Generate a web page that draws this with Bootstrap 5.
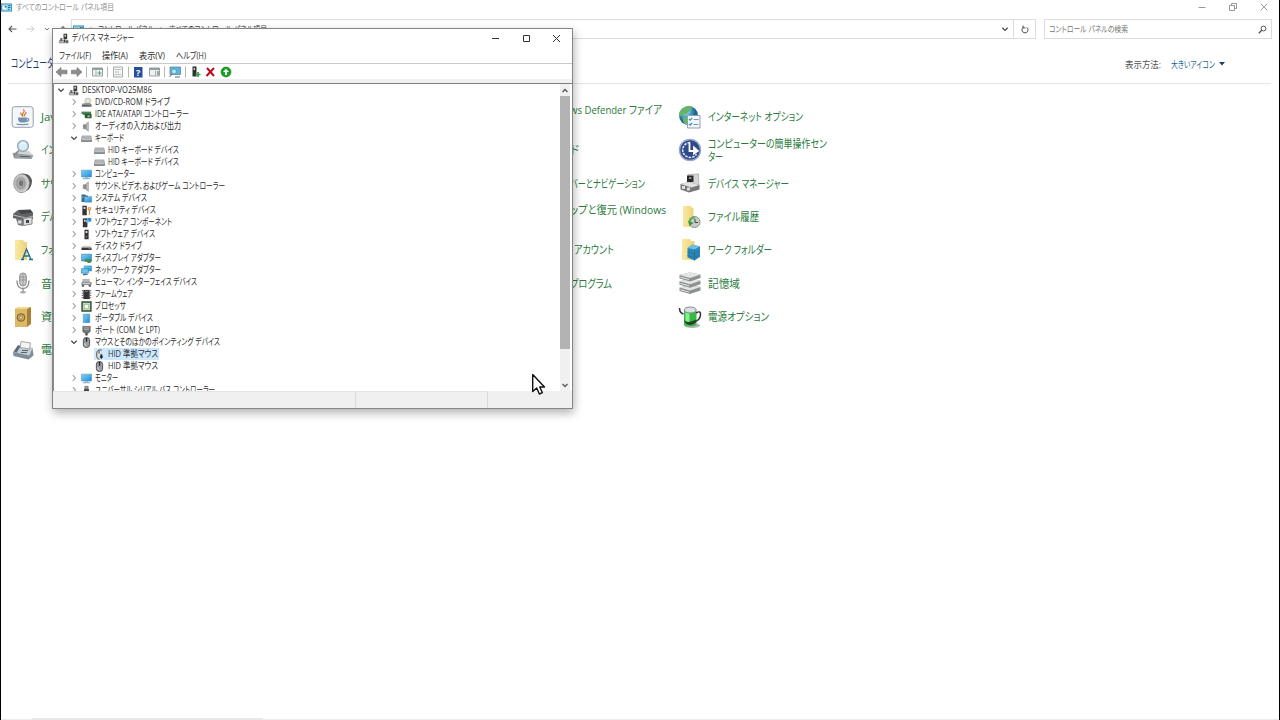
<!DOCTYPE html>
<html lang="ja">
<head>
<meta charset="utf-8">
<meta name="viewport" content="width=device-width, initial-scale=1">
<title>すべてのコントロール パネル項目</title>
<link href="https://cdn.jsdelivr.net/npm/bootstrap@5.3.0/dist/css/bootstrap.min.css" rel="stylesheet">
<style>
body{width:1280px;height:720px;overflow:hidden;background:#fff;font-family:"Open Sans","Noto Sans CJK JP",sans-serif;font-feature-settings:"palt";line-height:1.2;color:#222}
svg{display:block;flex:none}
.fit{display:inline-block;white-space:nowrap;transform-origin:0 50%}
.cpanel{width:1280px;height:720px;border:solid #000;border-width:0 1px}
.cp-title{height:14px;font-size:8.5px;color:#8f8f8f}
.cp-title .ctl{gap:23px;margin-right:11px}
.cp-nav{height:20px;margin-top:5px;padding-left:7px;font-size:8.5px;color:#444}
.cp-nav .arrows{width:63px}
.addr{height:20px;border:1px solid #dcdcdc;width:943px}
.addr .lead-icon{margin-left:1px}
.addr .crumb{margin-left:3px}
.reload{height:20px;width:22px;border:1px solid #dcdcdc;border-left:0}
.finder{height:20px;width:228px;border:1px solid #dcdcdc;margin-left:8px;color:#777}
.cp-head{height:45px;margin:0 8px 0 7px;border-bottom:1px solid #e6e6e6;padding:7px 46px 0 3px}
.cp-head h1{font-size:12px;font-weight:400;color:#1c3b78;margin:0;line-height:1.2}
.view{font-size:9.5px;color:#555}
.view .pick{color:#17628f;margin-left:10px}
.cp-grid{display:grid;grid-template-columns:repeat(5,166.75px);padding:16px 0 0 10px}
.entry{height:33.35px;gap:6px;font-size:11.3px;line-height:13.4px;color:#297a3c}
.behind{padding-left:59px}
.upper{padding-top:3px}
.bottomline{left:32px;bottom:0;width:231px;height:2px;background:#e8e8e8}
.baseline{left:1px;right:1px;bottom:0;height:1px;background:#ececec}
.devwin{left:52px;top:28px;width:521px;height:381px;border:1px solid #858585;background:#fff;box-shadow:1px 4px 9px rgba(0,0,0,.3);color:#2b2b2b}
.dw-title{height:19px;padding-left:5px;gap:3px;font-size:9px}
.dw-title .ctl{gap:21.5px;margin-right:11px}
.dw-menu{height:16px;border-bottom:1px solid #c9c9c9;padding:2px 0 0 6px;gap:11px;font-size:9px}
.dw-tools{height:15px;padding-left:2px}
.dw-gap{height:4px;background:#f0f0f0}
.dw-body{height:308px;border-top:1px solid #7f7f7f;border-left:1px solid #8b8b8b}
.tree{font-size:9.3px;overflow:hidden;height:307px}
.tree li{height:12px;display:flex;align-items:center;gap:3px}
.tree .l0{padding-left:3px}
.tree .l1{padding-left:16px}
.tree .l2{padding-left:40px}
.sel{background:#cce8ff;padding-right:1px;gap:3px}
.sbar{width:10px;background:#f0f0f0;margin-right:2px}
.sbar .thumb{height:253px;background:#b3b3b3}
.dw-status{height:17px;background:#f0f0f0}
.dw-status div{border-right:1px solid #dadada;border-top:1px solid #e4e4e4}
.pane-a{width:303px}
.pane-b{width:132px}
.mouse{left:531px;top:373px}
</style>
</head>
<body>
<svg width="0" height="0" class="position-absolute" aria-hidden="true">
<defs>
<linearGradient id="scr" x2="1" y2="1"><stop stop-color="#7fd0fa"/><stop offset="1" stop-color="#1e8cd8"/></linearGradient>
<linearGradient id="fold" x2="1"><stop stop-color="#f9e9a6"/><stop offset="1" stop-color="#efd277"/></linearGradient>
<radialGradient id="ball" cx=".35" cy=".3"><stop stop-color="#c9f0f7"/><stop offset=".6" stop-color="#3d9bc9"/><stop offset="1" stop-color="#1f6490"/></radialGradient>
<radialGradient id="cone" cx=".45" cy=".5"><stop stop-color="#e2e2e2"/><stop offset=".5" stop-color="#9a9a9a"/><stop offset=".8" stop-color="#c5c5c5"/><stop offset="1" stop-color="#dedede"/></radialGradient>
<symbol id="right" viewBox="0 0 8 8"><path d="M2.800 1.200 5.500 4 2.800 6.800" fill="none" stroke="#a6a6a6" stroke-width="1.100"/></symbol>
<symbol id="down" viewBox="0 0 8 8"><path d="M1.300 2.800 4 5.400 6.700 2.800" fill="none" stroke="#444" stroke-width="1.200"/></symbol>
<symbol id="cpl" viewBox="0 0 12 10"><path d="M0 .5h12v9H0z" fill="#2d8fb8"/><path d="M1 1.500h10v7H1z" fill="#9fdcf0"/><circle cx="4" cy="5" r="2.300" fill="#fff"/><path d="M4 5V2.700A2.300 2.300 0 0 1 6.300 5z" fill="#1c6c98"/><path d="M7.500 3h3M7.500 5h3M7.500 7h2" stroke="#175f8a"/></symbol>
<symbol id="pc" viewBox="0 0 12 12"><path d="M6 .8h4v6H6z" fill="#3a3a3a"/><path d="M7 2h1.800v2H7z" fill="#c3cccc"/><path d="M1.500 8h9.500v2.800H1.500z" fill="#b5b5b5" stroke="#666" stroke-width=".6"/><path d="M2.500 5.500h2.300v3.300H2.500z" fill="#666"/><path d="M6.500 7.200h1.200v3H6.500zM9 8.500h1.500v2H9z" fill="#333"/></symbol>
<symbol id="dvd" viewBox="0 0 12 12"><circle cx="7.500" cy="4.300" r="3.300" fill="#d5ddd5" stroke="#a5a5a5" stroke-width=".5"/><circle cx="7.500" cy="4.300" r=".9" fill="#fff"/><path d="M2 7h8l1.500 1.200v2.300H1V8.200z" fill="#5c6160"/><path d="M1 8.300h10.500" stroke="#bbb" stroke-width=".6"/><path d="M8.500 9.100h2v.8h-2z" fill="#49c052"/></symbol>
<symbol id="ide" viewBox="0 0 12 12"><path d="M.5 3h10.500v3.200H2.500L.5 5z" fill="#3d7a48"/><path d="M4 5.500h7.500v4.700H5L4 9z" fill="#2a5b37"/><circle cx="8.300" cy="7.800" r="1.300" fill="#8db494"/><path d="M1 3.200h9" stroke="#8bbd90" stroke-width=".6"/></symbol>
<symbol id="snd" viewBox="0 0 12 12"><path d="M2.500 4h2.200L8 1v10.200L4.700 8.500H2.500z" fill="#8a8a8a" stroke="#777" stroke-width=".5"/><path d="M6 3.200 8.500 1v10.200L6 9z" fill="#bdbdbd"/></symbol>
<symbol id="kbd" viewBox="0 0 12 12"><path d="M1.200 3.200h9.600l1 5.600H.2z" fill="#c4c6c8" stroke="#77797b" stroke-width=".6"/><path d="M1.500 4.800h9M1.200 6.300h9.600" stroke="#989a9c" stroke-width=".5"/><path d="M.2 8.900h11.600" stroke="#555"/></symbol>
<symbol id="mon" viewBox="0 0 12 12"><path d="M.4 1.300h11.200v7.400H.4z" fill="url(#scr)" stroke="#5795b8" stroke-width=".6"/><path d="M4.500 8.800h3v1.300h-3z" fill="#99b5c4"/><path d="M2 10.600h8" stroke="#66a1c7"/></symbol>
<symbol id="sys" viewBox="0 0 12 12"><path d="M.5 1.500h4l1 1.300h2v7h-7z" fill="#346f91"/><path d="M3.700 4h8v6h-8z" fill="url(#scr)" stroke="#527b93" stroke-width=".5"/><path d="M1.200 4h1.300v1H1.200z" fill="#d7edf8"/></symbol>
<symbol id="tow" viewBox="0 0 12 12"><path d="M3.800.8h4.500v10.400H3.800z" fill="#333"/><path d="M5 2.200h2v2.200H5z" fill="#dce4e6"/><path d="M5 8h2v1H5z" fill="#8a8a8a"/></symbol>
<symbol id="sec" viewBox="0 0 12 12"><path d="M1.500.8h4.800v10.400H1.500z" fill="#333"/><path d="M2.800 2.200h2v2.200h-2z" fill="#ddd"/><circle cx="9.200" cy="4" r="2.100" fill="#d8a54c"/><path d="M8.500 5h1.400v5.800H8.500z" fill="#d39a42"/><circle cx="9.200" cy="3.400" r=".6" fill="#fff"/></symbol>
<symbol id="cmp" viewBox="0 0 12 12"><path d="M2 1.500h5v9.700H2z" fill="#333"/><path d="M3.200 3h2v2h-2z" fill="#ddd"/><path d="M7.200 1h4v4h-4z" fill="#2a8bc6"/><path d="M5.500 3.200h3v3h-3z" fill="#6bbbe8"/></symbol>
<symbol id="hdd" viewBox="0 0 12 12"><path d="M2 5.300h8l1.500 2H.5z" fill="#d5cdbf"/><path d="M.5 7.200h11v2.600H.5z" fill="#383838"/><path d="M8.300 8h2v.8h-2z" fill="#b7b7b7"/></symbol>
<symbol id="disp" viewBox="0 0 12 12"><path d="M.6 1.300h10.800v7.400H.6z" fill="url(#scr)" stroke="#457d9d" stroke-width=".7"/><path d="M4 6.800h7.500v3h-1V11H7V9.500H4z" fill="#3f8b4e"/></symbol>
<symbol id="net" viewBox="0 0 12 12"><path d="M3.500 1h8v5.500h-8z" fill="url(#scr)" stroke="#3b86ad" stroke-width=".6"/><path d="M.5 4h7.500v5H.5z" fill="#66c6f2" stroke="#2c7ca6" stroke-width=".7"/><path d="M4.500 9v1.500H2.300h5" stroke="#558" fill="none"/></symbol>
<symbol id="hid" viewBox="0 0 12 12"><path d="M2 2.500h7v3H2z" fill="#bbb" stroke="#888" stroke-width=".5"/><path d="M.5 5.500h11v3.200H.5z" fill="#8c8e94"/><path d="M.8 8.500h2.600v2H.8zM8.300 8.500h2.600v2H8.300z" fill="#666"/><path d="M2 7h8" stroke="#ddd"/></symbol>
<symbol id="fw" viewBox="0 0 12 12"><path d="M2.500 1h7v10h-7z" fill="#343434"/><path d="M.8 2h1.400M.8 4.500h1.400M.8 7h1.400M.8 9.500h1.400M9.800 2h1.400M9.800 4.500h1.400M9.800 7h1.400M9.800 9.500h1.400" stroke="#555"/><path d="M4 2.500h4" stroke="#888"/></symbol>
<symbol id="cpu" viewBox="0 0 12 12"><path d="M1.200 1.200h9.600v9.600H1.200z" fill="#cddcc6" stroke="#2b5230" stroke-width="1.600"/><path d="M3.600 3.600h4.800v4.800H3.600z" fill="#fbfdf8" stroke="#86ab82" stroke-width=".8"/></symbol>
<symbol id="port" viewBox="0 0 12 12"><path d="M2.500 1.200h7v9.300h-7z" fill="url(#scr)" stroke="#36769b" stroke-width=".5"/></symbol>
<symbol id="com" viewBox="0 0 12 12"><path d="M2 1.500h8v5.300L8.700 8.500H3.300L2 6.800z" fill="#777" stroke="#4d4d4d" stroke-width=".7"/><path d="M3 3.200h6M3.500 5h5" stroke="#bbb" stroke-width=".8"/><path d="M4.700 8.500h2.600v2.900H4.700z" fill="#4c4c4c"/></symbol>
<symbol id="mou" viewBox="0 0 12 12"><rect x="2.600" y=".6" width="6.800" height="10.800" rx="3" fill="#9a9ea2" stroke="#3b3d40" stroke-width=".9"/><path d="M6 1v4.200" stroke="#222" stroke-width="1.500"/><path d="M4 7q.3 2.600 2 3" stroke="#eee" fill="none" stroke-width=".8"/></symbol>
<symbol id="mouoff" viewBox="0 0 12 12"><path d="M8.500 1.200Q3 .3 3 4.500v4q.4 2.400 3 2.700" fill="#e0e2e4" stroke="#444"/><path d="M5.500 2v3" stroke="#333"/><path d="M7 5.800h2v2.400h1.300L8 10.800 5.800 8.200H7z" fill="#222"/></symbol>
<symbol id="usb" viewBox="0 0 12 12"><path d="M4.200 1.500h3.600v3H4.200z" fill="#999" stroke="#555" stroke-width=".6"/><path d="M3.200 4.500h5.600V11H3.200z" fill="#444"/></symbol>
<symbol id="java" viewBox="0 0 24 24"><rect x="1.200" y="1.700" width="21" height="20.600" rx="2.500" fill="#f4f6f9" stroke="#94a0ae"/><path d="M12 4.500c4 2-3 4 0 7M14.500 7c2 1.400-2.600 2.500-1 4.500M10 7.500c-1 1 0 2 .8 3" stroke="#d97936" stroke-width="1.200" fill="none"/><path d="M7 12.500h9q0 5-2.500 5H9.500q-2.500-.6-2.500-5z" fill="#7490ac"/><path d="M16 13.500q3 0 1 2.400l-2 .6M5.500 19q6 1.600 12 0" stroke="#6483a2" stroke-width="1.100" fill="none"/></symbol>
<symbol id="idx" viewBox="0 0 24 24"><path d="M1.500 15h13l8 2.500-2 3.500-17.500-.5z" fill="#969ca1"/><path d="M2 15l4-2h12l4.500 4.500z" fill="#d0d4d6"/><path d="M9 18.500h10" stroke="#666"/><circle cx="12" cy="8" r="5.400" fill="#d8edf8" stroke="#8fa3b2" stroke-width="1.400"/><path d="M8 12.500 3.200 17.500" stroke="#888" stroke-width="1.800"/><path d="M10 6q2-2 4.500-.4" stroke="#fff" fill="none"/></symbol>
<symbol id="spk" viewBox="0 0 24 24"><path d="M9 3q9-2 12 6 0 9-6 11L9 22z" fill="#595959"/><ellipse cx="10.500" cy="12.300" rx="7.800" ry="9.300" fill="url(#cone)" stroke="#8a8a8a" stroke-width=".8"/><ellipse cx="10" cy="12.300" rx="2.300" ry="3" fill="#777"/></symbol>
<symbol id="prn" viewBox="0 0 24 24"><path d="M7 5 19.500 4.500 22 8 9 11z" fill="#45484a"/><path d="M2 9l5-4 3 4 12-1.500V14l-7 2L2 13z" fill="#606467"/><path d="M2 10l13 3 7-2" fill="none" stroke="#bbb"/><path d="M12.500 13.500 21 12v7l-8.500 1.500z" fill="#ddd" stroke="#888"/><path d="M5 13.500l7 1V21l-5-1z" fill="#777"/><path d="M7 15.500h3.500v3H7z" fill="#dedede"/><path d="M15 15h3v3h-3z" fill="#445"/></symbol>
<symbol id="fnt" viewBox="0 0 24 24"><path d="M4 2h8l1.500 2H16v18H4z" fill="url(#fold)"/><path d="M10 21.500h3M18 21.500h4M11.500 21.500 15.500 11l4.500 10.500M13 18h5" stroke="#246d97" stroke-width="1.400" fill="none"/></symbol>
<symbol id="mic" viewBox="0 0 24 24"><rect x="8.700" y="2" width="6.600" height="13" rx="3.300" fill="#c9cbce" stroke="#8b8b8b"/><path d="M6 9.500q0 8 6 8t6-8M12 17.500V21" stroke="#8a8a8a" stroke-width="1.300" fill="none"/><ellipse cx="12" cy="21.200" rx="3" ry="1.200" fill="#aaa"/><path d="M9 6h6M9 9h6M12 3v11" stroke="#858585" stroke-width=".7"/></symbol>
<symbol id="safe" viewBox="0 0 24 24"><path d="M4 4 8 2h12v17l-4 3H4z" fill="#a98037"/><path d="M4 4h12v18H4z" fill="#dcb965"/><path d="M4 4l4-2h12l-4 2z" fill="#f3d98f"/><circle cx="10" cy="12.500" r="3.800" fill="#c9a963" stroke="#765c27"/><circle cx="10" cy="12.500" r="1.500" fill="#eee6ce" stroke="#765c27" stroke-width=".6"/></symbol>
<symbol id="fax" viewBox="0 0 24 24"><path d="M2 14 7 7l14.500 3 1 7.500-5 4L2.500 18z" fill="#7f8d98"/><path d="M2 14l5-6.500 14.500 2.500-3 7.500z" fill="#c3ccd3"/><path d="M10 3.500l9.500 1.500-1 6-9.500-1.500z" fill="#f4f4f1" stroke="#a0a8ad"/><path d="M3 13.500l4-6 2.500.8-4 6.500z" fill="#5c6872"/><path d="M11 12.500h6M10 14.500h6" stroke="#5a646c"/></symbol>
<symbol id="inet" viewBox="0 0 24 24"><circle cx="10.500" cy="10.500" r="9.500" fill="url(#ball)"/><path d="M3 5Q9-.5 14 1.500q1 3-3 4-1 4-5 4-3 2-5 1 0-3 2-5.500zM5 12q5-1 6 3-1 4-3 5-4-3-3-8z" fill="#66b567"/><path d="M9.500 10.500h12.500v12.500H9.500z" fill="#f4f7f9" stroke="#91a1ad"/><path d="M11 14l1.200 1.200 2-2.400M11 19l1.200 1.200 2-2.400" stroke="#2e93b7" fill="none" stroke-width="1.200"/><path d="M15.500 14.500h5M15.500 19.500h5" stroke="#7b99aa"/></symbol>
<symbol id="ease" viewBox="0 0 24 24"><circle cx="12" cy="12" r="10.500" fill="#30498b" stroke="#98a6c5" stroke-width="1.400"/><path d="M12 4.500A7.500 7.500 0 1 0 18.500 16" fill="none" stroke="#dfe6f6" stroke-width="1.600" stroke-dasharray="2.600 1"/><path d="M11.500 4.500v8.500H18M16 9.500l3.800 3.500-3.800 2.500z" stroke="#fff" stroke-width="1.800" fill="none"/></symbol>
<symbol id="dev" viewBox="0 0 24 24"><path d="M10 3.500 20.500 3l.5 12.500L10 16z" fill="#d5d5d5" stroke="#999" stroke-width=".6"/><path d="M9 4.500h6.500v6.500H9z" fill="#25282a"/><path d="M11 6h2.500v2H11z" fill="#8a8a8a"/><path d="M2.500 13l8-2 11 3v4.500L11 21.500l-8.500-3z" fill="#777"/><path d="M2.500 13l8-2 11 3-8 2.500z" fill="#e1e1e1"/><path d="M4 15h3v3H4zM9 16.500h3v3H9z" fill="#ddd"/></symbol>
<symbol id="hist" viewBox="0 0 24 24"><path d="M5 1h8l1 2h1.500v19H5z" fill="url(#fold)"/><circle cx="16.500" cy="17" r="5.600" fill="#c5cbc6" stroke="#8f9791"/><path d="M11.500 18q0-5.500 5.500-5.500" stroke="#58b056" stroke-width="2.200" fill="none"/><path d="M10.500 16l1 5 4-3z" fill="#36983b"/><path d="M17 14v3.500h3" stroke="#444" fill="none"/></symbol>
<symbol id="work" viewBox="0 0 24 24"><path d="M4 1h8l1 2h3.500v19H4z" fill="url(#fold)"/><path d="M9.500 10l5-3.500 7.500 2V19l-5.500 3.500-7-3z" fill="#2b87b5"/><path d="M9.500 10l5-3.500 7.500 2-5.500 3z" fill="#6fbede"/><path d="M16.500 11.500v11M9.500 14l7 2 5.500-3M9.500 17.500l7 2 5.500-3" stroke="#1c6892" stroke-width=".6" fill="none"/></symbol>
<symbol id="stor" viewBox="0 0 24 24"><g id="slab"><path d="M1.500 16.500 12 14l10.500 2v3.500L12 23 1.500 20z" fill="#8d9191"/><path d="M1.500 16.500 12 14l10.500 2-10.500 3.500z" fill="#e4e5e5"/><path d="M2.500 18.800l8.500 2.300" stroke="#e5e5e5"/></g><use href="#slab" y="-6.300"/><use href="#slab" y="-12.600"/></symbol>
<symbol id="pow" viewBox="0 0 24 24"><ellipse cx="14" cy="20.500" rx="8" ry="2.600" fill="#b5b5b5"/><path d="M6 6q6-4 12.500 0v14q-6 3-12.500 0z" fill="#35ba48"/><path d="M7.500 7q3-1.800 4-1v12q-2 0-4-1z" fill="#8bef8e"/><ellipse cx="12.200" cy="5" rx="6" ry="3" fill="#d8e1e1" stroke="#7e8c8c"/><path d="M5.500 9Q1.500 8 1.500 3M18 8q5-3 4.500 2t-6 7" stroke="#333" stroke-width="1.500" fill="none"/><path d="M6 15q4 4 12-.5 0 5-6 5.500-5-.5-6-5z" fill="#26412b"/></symbol>
</defs>
</svg>

<main class="cpanel position-relative">
  <header class="cp-title d-flex align-items-center">
    <svg width="11" height="9"><use href="#cpl"/></svg>
    <span class="fit ms-1" data-w="98">すべてのコントロール パネル項目</span>
    <div class="ctl d-flex align-items-center ms-auto">
      <svg width="8" height="8"><path d="M.5 4.500h7" stroke="#999"/></svg>
      <svg width="8" height="8" fill="none" stroke="#999"><path d="M.5 2.500h5v5h-5zM2.500 2.500v-2h5v5h-2"/></svg>
      <svg width="8" height="8"><path d="m.8.8 6.400 6.400M7.200.8.8 7.200" stroke="#888" stroke-width=".8"/></svg>
    </div>
  </header>
  <nav class="cp-nav d-flex align-items-center">
    <div class="arrows d-flex align-items-center">
      <svg width="9" height="8" fill="none" stroke="#555" stroke-width="1.100"><path d="M8.500 4H1M4 1 1 4l3 3"/></svg>
      <svg class="ms-auto" width="9" height="8" fill="none" stroke="#ccc"><path d="M.5 4H8M5 1l3 3-3 3"/></svg>
      <svg class="ms-auto" width="6" height="6"><path d="m1 2 2 2 2-2" fill="none" stroke="#777"/></svg>
      <svg class="ms-auto me-1" width="8" height="9" fill="none" stroke="#555"><path d="M4 9V1.500M1 4.500l3-3 3 3"/></svg>
    </div>
    <div class="addr d-flex align-items-center">
      <svg class="lead-icon" width="11" height="9"><use href="#cpl"/></svg>
      <svg width="7" height="7" class="ms-1"><use href="#right"/></svg>
      <span class="fit crumb" data-w="56">コントロール パネル</span>
      <svg width="7" height="7" class="ms-1"><use href="#right"/></svg>
      <span class="fit ms-1" data-w="98">すべてのコントロール パネル項目</span>
      <svg width="8" height="8" class="ms-auto me-1"><use href="#down"/></svg>
    </div>
    <div class="reload d-flex align-items-center justify-content-center">
      <svg width="8" height="9" fill="none" stroke="#444"><path d="M2.300 2.400a3 3 0 1 0 3.400 0M2 .5v2.400h2.400"/></svg>
    </div>
    <div class="finder d-flex align-items-center justify-content-between px-1">
      <span class="fit" data-w="79">コントロール パネルの検索</span>
      <svg width="9" height="9" fill="none" stroke="#555"><circle cx="5.500" cy="3.500" r="2.400"/><path d="M3.700 5.300.8 8.200" stroke-width="1.300"/></svg>
    </div>
  </nav>
  <div class="cp-head d-flex align-items-center">
    <h1><span class="fit" data-w="43">コンピュータ</span></h1>
    <div class="view d-flex align-items-center ms-auto">
      <span class="fit" data-w="36">表示方法:</span>
      <span class="fit pick" data-w="44">大きいアイコン</span>
      <svg width="6" height="4" class="ms-1"><path d="M0 0h6L3 3.600z" fill="#1d3f5c"/></svg>
    </div>
  </div>
  <section class="cp-grid">
    <div>
      <div class="entry d-flex align-items-center"><svg width="24" height="24"><use href="#java"/></svg><span class="fit" data-w="15">Jav</span></div>
      <div class="entry d-flex align-items-center"><svg width="24" height="24"><use href="#idx"/></svg><span class="fit" data-w="15">イン</span></div>
      <div class="entry d-flex align-items-center"><svg width="24" height="24"><use href="#spk"/></svg><span class="fit" data-w="18">サウ</span></div>
      <div class="entry d-flex align-items-center"><svg width="24" height="24"><use href="#prn"/></svg><span class="fit" data-w="17">デバ</span></div>
      <div class="entry d-flex align-items-center"><svg width="24" height="24"><use href="#fnt"/></svg><span class="fit" data-w="14">フォ</span></div>
      <div class="entry d-flex align-items-center"><svg width="24" height="24"><use href="#mic"/></svg><span class="fit" data-w="11">音</span></div>
      <div class="entry d-flex align-items-center"><svg width="24" height="24"><use href="#safe"/></svg><span class="fit" data-w="11">資</span></div>
      <div class="entry d-flex align-items-center"><svg width="24" height="24"><use href="#fax"/></svg><span class="fit" data-w="11">電</span></div>
    </div>
    <div></div>
    <div></div>
    <div class="behind">
      <div class="entry d-flex align-items-start upper"><span class="fit" data-w="92">ws Defender ファイア</span></div>
      <div class="entry d-flex align-items-center"><span class="fit" data-w="9">ド</span></div>
      <div class="entry d-flex align-items-center"><span class="fit" data-w="75">バーとナビゲーション</span></div>
      <div class="entry d-flex align-items-start upper"><span class="fit" data-w="96">ップと復元 (Windows</span></div>
      <div class="entry d-flex align-items-center ps-1"><span class="fit" data-w="40">アカウント</span></div>
      <div class="entry d-flex align-items-center"><span class="fit" data-w="42">プログラム</span></div>
    </div>
    <div>
      <div class="entry d-flex align-items-center"><svg width="24" height="24"><use href="#inet"/></svg><span class="fit" data-w="95">インターネット オプション</span></div>
      <div class="entry d-flex align-items-center"><svg width="24" height="24"><use href="#ease"/></svg><div class="d-flex flex-column align-items-start"><span class="fit" data-w="119">コンピューターの簡単操作セン</span><span class="fit" data-w="15">ター</span></div></div>
      <div class="entry d-flex align-items-center"><svg width="24" height="24"><use href="#dev"/></svg><span class="fit" data-w="81">デバイス マネージャー</span></div>
      <div class="entry d-flex align-items-center"><svg width="24" height="24"><use href="#hist"/></svg><span class="fit" data-w="51">ファイル履歴</span></div>
      <div class="entry d-flex align-items-center"><svg width="24" height="24"><use href="#work"/></svg><span class="fit" data-w="64">ワーク フォルダー</span></div>
      <div class="entry d-flex align-items-center"><svg width="24" height="24"><use href="#stor"/></svg><span class="fit" data-w="32">記憶域</span></div>
      <div class="entry d-flex align-items-center"><svg width="24" height="24"><use href="#pow"/></svg><span class="fit" data-w="61">電源オプション</span></div>
    </div>
  </section>
</main>
<div class="baseline position-absolute"></div>
<div class="bottomline position-absolute"></div>

<section class="devwin position-absolute">
  <div class="dw-title d-flex align-items-center">
    <svg width="11" height="11"><use href="#pc"/></svg>
    <span class="fit" data-w="62">デバイス マネージャー</span>
    <div class="ctl d-flex align-items-center ms-auto">
      <svg width="9" height="9"><path d="M1 4.500h7" stroke="#333"/></svg>
      <svg width="9" height="9"><path d="M1.500 1.500h6v6h-6z" fill="none" stroke="#333"/></svg>
      <svg width="9" height="9"><path d="m1 1 7 7M8 1 1 8" stroke="#333"/></svg>
    </div>
  </div>
  <div class="dw-menu d-flex align-items-center">
    <span class="fit" data-w="32">ファイル(F)</span>
    <span class="fit" data-w="26">操作(A)</span>
    <span class="fit" data-w="26">表示(V)</span>
    <span class="fit" data-w="30">ヘルプ(H)</span>
  </div>
  <div class="dw-tools">
    <svg width="180" height="15" viewBox="55 64.500 180 15">
      <path d="M56 72.500l5-4.500v2.700h6v3.600h-6V77z" fill="#8d8d8d" stroke="#6b6b6b" stroke-width=".6"/>
      <path d="M82 72.500l-5-4.500v2.700h-5.500v3.600H77V77z" fill="#8d8d8d" stroke="#6b6b6b" stroke-width=".6"/>
      <path d="M86.500 67v11M107.500 67v11M128.500 67v11M164.500 67v11M185.500 67v11" stroke="#b5b5b5"/>
      <path d="M92.500 68.500h10v8h-10z" fill="#eef1f1" stroke="#9aa3a3"/><path d="M92.500 69.500h10" stroke="#899" stroke-width="1.800"/><path d="M96 71v5.500" stroke="#aab"/><path d="M97.500 73.500h4M99.500 71.500v4" stroke="#55a06a"/>
      <path d="M113.500 67.500h9v10h-9z" fill="#f4f4f4" stroke="#a5abab"/><path d="M115 70h6M115 72.500h4M115 75h6" stroke="#a6b2b6" stroke-width=".8"/>
      <path d="M134 67.500h8.500v10.500H134z" fill="#264f99"/>
      <path d="M149.500 68.500h10v8h-10z" fill="#eef1f1" stroke="#9aa3a3"/><path d="M149.500 69.500h10" stroke="#899" stroke-width="1.800"/><path d="M155.500 71v5.500" stroke="#aab"/><path d="M157 72.500h2M157 74.500h2" stroke="#555"/>
      <path d="M170 67.500h10.500v7.500H170z" fill="#5db5df" stroke="#4c7f99" stroke-width=".7"/><circle cx="174" cy="72" r="2.400" fill="#b9e5f7" stroke="#598da6" stroke-width=".7"/><path d="M172 74.500 169.500 77.500M175 77.500h5" stroke="#58717e"/>
      <path d="M192.500 67h4v10h-4z" fill="#2d332e"/><path d="M193.500 68.500h1.500v2h-1.500z" fill="#ccc"/><path d="M195.500 75h5M198 72.500v5" stroke="#36a245" stroke-width="1.700"/>
      <path d="M207 68.500l7 8M214 68.500l-7.500 8" stroke="#b90d20" stroke-width="2"/>
      <circle cx="226" cy="72.500" r="5" fill="#19a126" stroke="#147d1d" stroke-width=".6"/><path d="M226 69.200l3 3.300h-2v3h-2v-3h-2z" fill="#fff"/>
      <text x="136" y="76" font-size="9" font-weight="700" fill="#fff">?</text>
    </svg>
  </div>
  <div class="dw-gap"></div>
  <div class="dw-body d-flex">
    <ul class="tree list-unstyled mb-0 flex-grow-1">
      <li class="l0"><svg width="8" height="8"><use href="#down"/></svg><svg width="11" height="11"><use href="#pc"/></svg><span class="fit" data-w="70">DESKTOP-VO25M86</span></li>
      <li class="l1"><svg width="8" height="8"><use href="#right"/></svg><svg width="11" height="11"><use href="#dvd"/></svg><span class="fit" data-w="75">DVD/CD-ROM ドライブ</span></li>
      <li class="l1"><svg width="8" height="8"><use href="#right"/></svg><svg width="11" height="11"><use href="#ide"/></svg><span class="fit" data-w="94">IDE ATA/ATAPI コントローラー</span></li>
      <li class="l1"><svg width="8" height="8"><use href="#right"/></svg><svg width="11" height="11"><use href="#snd"/></svg><span class="fit" data-w="86">オーディオの入力および出力</span></li>
      <li class="l1"><svg width="8" height="8"><use href="#down"/></svg><svg width="11" height="11"><use href="#kbd"/></svg><span class="fit" data-w="29">キーボード</span></li>
      <li class="l2"><svg width="11" height="11"><use href="#kbd"/></svg><span class="fit" data-w="71">HID キーボード デバイス</span></li>
      <li class="l2"><svg width="11" height="11"><use href="#kbd"/></svg><span class="fit" data-w="71">HID キーボード デバイス</span></li>
      <li class="l1"><svg width="8" height="8"><use href="#right"/></svg><svg width="11" height="11"><use href="#mon"/></svg><span class="fit" data-w="40">コンピューター</span></li>
      <li class="l1"><svg width="8" height="8"><use href="#right"/></svg><svg width="11" height="11"><use href="#snd"/></svg><span class="fit" data-w="130">サウンド、ビデオ、およびゲーム コントローラー</span></li>
      <li class="l1"><svg width="8" height="8"><use href="#right"/></svg><svg width="11" height="11"><use href="#sys"/></svg><span class="fit" data-w="52">システム デバイス</span></li>
      <li class="l1"><svg width="8" height="8"><use href="#right"/></svg><svg width="11" height="11"><use href="#sec"/></svg><span class="fit" data-w="61">セキュリティ デバイス</span></li>
      <li class="l1"><svg width="8" height="8"><use href="#right"/></svg><svg width="11" height="11"><use href="#cmp"/></svg><span class="fit" data-w="77">ソフトウェア コンポーネント</span></li>
      <li class="l1"><svg width="8" height="8"><use href="#right"/></svg><svg width="11" height="11"><use href="#tow"/></svg><span class="fit" data-w="60">ソフトウェア デバイス</span></li>
      <li class="l1"><svg width="8" height="8"><use href="#right"/></svg><svg width="11" height="11"><use href="#hdd"/></svg><span class="fit" data-w="47">ディスク ドライブ</span></li>
      <li class="l1"><svg width="8" height="8"><use href="#right"/></svg><svg width="11" height="11"><use href="#disp"/></svg><span class="fit" data-w="66">ディスプレイ アダプター</span></li>
      <li class="l1"><svg width="8" height="8"><use href="#right"/></svg><svg width="11" height="11"><use href="#net"/></svg><span class="fit" data-w="66">ネットワーク アダプター</span></li>
      <li class="l1"><svg width="8" height="8"><use href="#right"/></svg><svg width="11" height="11"><use href="#hid"/></svg><span class="fit" data-w="102">ヒューマン インターフェイス デバイス</span></li>
      <li class="l1"><svg width="8" height="8"><use href="#right"/></svg><svg width="11" height="11"><use href="#fw"/></svg><span class="fit" data-w="38">ファームウェア</span></li>
      <li class="l1"><svg width="8" height="8"><use href="#right"/></svg><svg width="11" height="11"><use href="#cpu"/></svg><span class="fit" data-w="31">プロセッサ</span></li>
      <li class="l1"><svg width="8" height="8"><use href="#right"/></svg><svg width="11" height="11"><use href="#port"/></svg><span class="fit" data-w="58">ポータブル デバイス</span></li>
      <li class="l1"><svg width="8" height="8"><use href="#right"/></svg><svg width="11" height="11"><use href="#com"/></svg><span class="fit" data-w="65">ポート (COM と LPT)</span></li>
      <li class="l1"><svg width="8" height="8"><use href="#down"/></svg><svg width="11" height="11"><use href="#mou"/></svg><span class="fit" data-w="125">マウスとそのほかのポインティング デバイス</span></li>
      <li class="l2"><div class="sel d-flex align-items-center h-100"><svg width="11" height="11"><use href="#mouoff"/></svg><span class="fit" data-w="50">HID 準拠マウス</span></div></li>
      <li class="l2"><svg width="11" height="11"><use href="#mou"/></svg><span class="fit" data-w="50">HID 準拠マウス</span></li>
      <li class="l1"><svg width="8" height="8"><use href="#right"/></svg><svg width="11" height="11"><use href="#mon"/></svg><span class="fit" data-w="23">モニター</span></li>
      <li class="l1"><svg width="8" height="8"><use href="#right"/></svg><svg width="11" height="11"><use href="#usb"/></svg><span class="fit" data-w="120">ユニバーサル シリアル バス コントローラー</span></li>
    </ul>
    <div class="sbar d-flex flex-column align-items-center">
      <svg width="8" height="12" fill="none" stroke="#555" stroke-width="1.300"><path d="m1.500 8 2.500-2.500L6.500 8"/></svg>
      <div class="thumb w-100"></div>
      <svg class="mt-auto" width="8" height="12" fill="none" stroke="#555" stroke-width="1.300"><path d="m1.500 5 2.500 2.500L6.500 5"/></svg>
    </div>
  </div>
  <div class="dw-status d-flex">
    <div class="pane-a"></div><div class="pane-b"></div>
  </div>
</section>

<svg class="mouse position-absolute" width="15" height="24" viewBox="0 0 15 24"><path d="M1.700 1.500v17l4-3.500 2.700 6 3-1.300L8.800 14h4.700z" fill="#fff" stroke="#111" stroke-width="1.400" stroke-linejoin="round"/></svg>

<script src="https://cdn.jsdelivr.net/npm/bootstrap@5.3.0/dist/js/bootstrap.bundle.min.js"></script>
<script>
// Condense each label to its interface width
document.querySelectorAll('.fit').forEach(function (el) {
  var natural = el.getBoundingClientRect().width, target = +el.dataset.w;
  el.style.transform = 'scaleX(' + target / natural + ')';
  el.style.marginRight = (target - natural) + 'px';
});
</script>
</body>
</html>
